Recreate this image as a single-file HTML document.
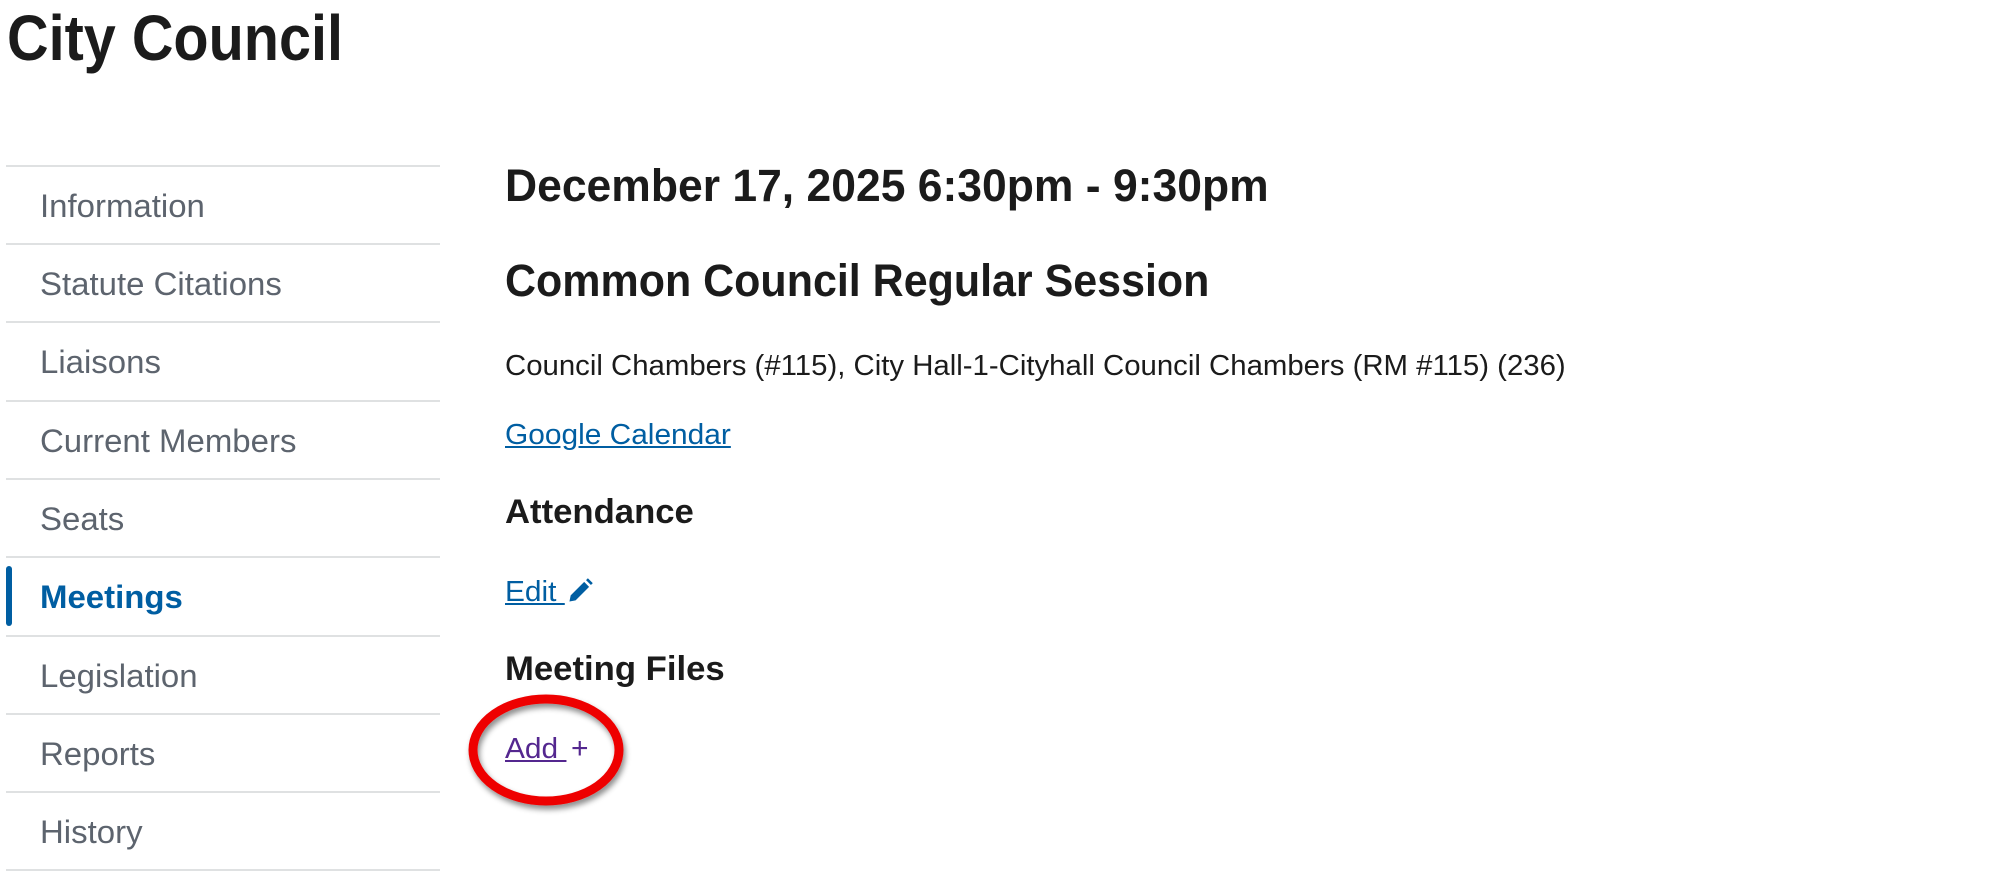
<!DOCTYPE html>
<html><head><meta charset="utf-8"><style>
body{margin:0;width:1999px;height:872px;background:#fff;font-family:"Liberation Sans",sans-serif;position:relative;overflow:hidden}
.t{position:absolute;white-space:nowrap;transform-origin:0 0;line-height:1}
.line{position:absolute;left:6px;width:434px;height:2px;background:#dfe1e2}
.nav{position:absolute;left:40px;font-size:32px;color:#5d646e;white-space:nowrap;transform:scaleX(1.03);transform-origin:0 0;line-height:1}
a{color:#005ea2}
</style></head><body>
<div class="t" style="left:7px;top:6px;font-size:64px;font-weight:bold;color:#1b1b1b;transform:scaleX(0.90)">City Council</div>

<div class="line" style="top:165px"></div>
<div class="line" style="top:243px"></div>
<div class="line" style="top:321px"></div>
<div class="line" style="top:400px"></div>
<div class="line" style="top:478px"></div>
<div class="line" style="top:556px"></div>
<div class="line" style="top:635px"></div>
<div class="line" style="top:713px"></div>
<div class="line" style="top:791px"></div>
<div class="line" style="top:869px"></div>
<div style="position:absolute;left:6px;top:566px;width:6px;height:60px;background:#005ea2;border-radius:3px"></div>

<div class="nav" style="top:190px">Information</div>
<div class="nav" style="top:268px">Statute Citations</div>
<div class="nav" style="top:346px">Liaisons</div>
<div class="nav" style="top:425px">Current Members</div>
<div class="nav" style="top:503px">Seats</div>
<div class="nav" style="top:581px;color:#005ea2;font-weight:bold">Meetings</div>
<div class="nav" style="top:660px">Legislation</div>
<div class="nav" style="top:738px">Reports</div>
<div class="nav" style="top:816px">History</div>

<div class="t" style="left:505px;top:163px;font-size:45px;font-weight:bold;color:#1b1b1b;transform:scaleX(0.988)">December 17, 2025 6:30pm - 9:30pm</div>
<div class="t" style="left:505px;top:258px;font-size:45px;font-weight:bold;color:#1b1b1b;transform:scaleX(0.955)">Common Council Regular Session</div>
<div class="t" style="left:505px;top:352px;font-size:29px;color:#1b1b1b;transform:scaleX(1.012)">Council Chambers (#115), City Hall-1-Cityhall Council Chambers (RM #115) (236)</div>
<div class="t" style="left:505px;top:421px;font-size:29px;transform:scaleX(1.03)"><a href="#">Google Calendar</a></div>
<div class="t" style="left:505px;top:495px;font-size:34px;font-weight:bold;color:#1b1b1b;transform:scaleX(1.02)">Attendance</div>
<div class="t" style="left:505px;top:578px;font-size:29px;transform:scaleX(1.03)"><a href="#">Edit&nbsp;</a></div>
<svg style="position:absolute;left:567px;top:577px" width="27" height="27" viewBox="0 0 22 22"><path d="M2 20 L3 15 L14 4 L18 8 L7 19 Z" fill="#005ea2"/><path d="M15.5 2.5 L17 1 L21 5 L19.5 6.5 Z" fill="#005ea2"/></svg>
<div class="t" style="left:505px;top:652px;font-size:34px;font-weight:bold;color:#1b1b1b;transform:scaleX(1.02)">Meeting Files</div>
<div class="t" style="left:505px;top:735px;font-size:29px;transform:scaleX(1.03)"><a href="#" style="color:#54278f">Add&nbsp;</a></div>
<div class="t" style="left:571px;top:734px;font-size:30px;color:#54278f">+</div>
<svg style="position:absolute;left:0;top:0;overflow:visible" width="1" height="1"><defs><filter id="s" x="-20%" y="-20%" width="140%" height="140%"><feDropShadow dx="2" dy="4" stdDeviation="3" flood-color="#000" flood-opacity="0.45"/></filter></defs><ellipse cx="546" cy="750" rx="73" ry="51" fill="none" stroke="#ee0000" stroke-width="9" filter="url(#s)"/></svg>
</body></html>
